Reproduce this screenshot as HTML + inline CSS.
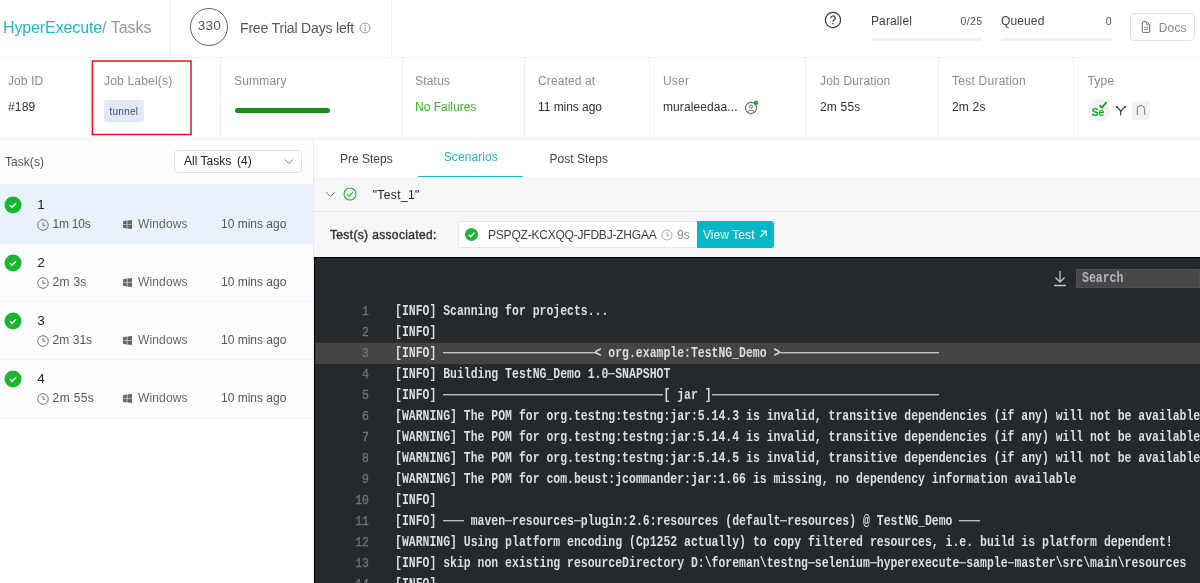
<!DOCTYPE html>
<html>
<head>
<meta charset="utf-8">
<style>
*{box-sizing:border-box;margin:0;padding:0}
html,body{width:1200px;height:583px;overflow:hidden;background:#fff}
body{font-family:"Liberation Sans",sans-serif;color:#333;position:relative;font-size:12px}
.abs{position:absolute;white-space:nowrap}
.vline{position:absolute;width:1px;background:#eef0f5}
.hline{position:absolute;height:1px;background:#eef0f5}
.lbl{position:absolute;font-size:12px;color:#8c8c8c;white-space:nowrap;letter-spacing:.2px}
.val{position:absolute;font-size:12px;color:#333;white-space:nowrap;letter-spacing:.2px}
/* tasks */
.trow{position:absolute;left:0;width:313px;height:58px}
.trow.sel{}
.trow .num{position:absolute;left:37.3px;top:12.5px;font-size:13.5px;color:#222}
.trow .dur{position:absolute;left:52.6px;top:33px;font-size:12px;color:#555;letter-spacing:-.2px}
.trow .os{position:absolute;left:138px;top:33px;font-size:12px;color:#666;letter-spacing:.15px}
.trow .ago{position:absolute;left:221px;top:33px;font-size:12px;color:#555;letter-spacing:0}
.trow svg.ok{position:absolute;left:4px;top:12px}
.trow svg.clk{position:absolute;left:37px;top:34.5px}
.trow svg.win{position:absolute;left:123px;top:36px}
/* log */
#log{position:absolute;left:314px;top:257px;width:886px;height:326px;background:#24292e;overflow:hidden}
.ln{position:absolute;left:0;width:886px;height:21px;font-family:"Liberation Mono",monospace;font-size:11.47px;line-height:21px;color:#dedede;white-space:pre}
.ln .n{position:absolute;left:0;width:55px;text-align:right;color:#70757a;-webkit-text-stroke:.3px #70757a;transform:scaleY(1.15);transform-origin:0 14px}
.ln .t{position:absolute;left:81px;font-weight:bold;transform:scaleY(1.22);transform-origin:0 14px}
.ln .d{display:inline-block;height:1.35px;background:#d4d4d4;vertical-align:2.9px}
.ln.hl{background:#444}
.ln.hl:before{content:"";position:absolute;left:0;top:-1px;width:886px;height:0;border-top:1px dotted #30353a}
</style>
</head>
<body>
<div id="root" style="position:absolute;left:0;top:0;width:1200px;height:583px;will-change:transform">
<!-- top header -->
<div class="abs" style="left:3px;top:18.5px;font-size:16px;color:#1fb6c9;letter-spacing:-.12px">HyperExecute<span style="color:#999;letter-spacing:0">/ Tasks</span></div>
<div class="vline" style="left:170px;top:0;height:57px"></div>
<div class="vline" style="left:391px;top:0;height:57px"></div>
<div class="abs" style="left:190px;top:7.8px;width:38.4px;height:38.4px;border:1.3px solid #5e6272;border-radius:50%;text-align:center;line-height:34.6px;font-size:13.5px;color:#525868;letter-spacing:.3px;padding-left:.3px">330</div>
<div class="abs" style="left:240px;top:20px;font-size:14px;color:#4e556e;letter-spacing:-.175px">Free Trial Days left</div>
<svg class="abs" style="left:359px;top:22px" width="12" height="12" viewBox="0 0 12 12"><circle cx="6" cy="6" r="5" fill="none" stroke="#999" stroke-width="1"/><rect x="5.5" y="5" width="1" height="4" fill="#999"/><rect x="5.5" y="3" width="1" height="1.2" fill="#999"/></svg>

<svg class="abs" style="left:824.2px;top:10.8px" width="18" height="18" viewBox="0 0 18 18"><circle cx="9" cy="9" r="7.6" fill="none" stroke="#333" stroke-width="1.2"/><path d="M6.8 7.2 a2.2 2.2 0 1 1 3.2 1.9 c-.7.4-1 .8-1 1.6" fill="none" stroke="#333" stroke-width="1.2"/><circle cx="9" cy="12.8" r=".8" fill="#333"/></svg>
<div class="abs" style="left:871px;top:14.3px;font-size:12px;color:#444;letter-spacing:.12px">Parallel</div>
<div class="abs" style="left:960.5px;top:15px;font-size:10.5px;color:#555;letter-spacing:.35px">0/25</div>
<div class="abs" style="left:871px;top:37.6px;width:111px;height:3.5px;background:#eff1f9;border-radius:2px"></div>
<div class="abs" style="left:1001px;top:14.3px;font-size:12px;color:#444;letter-spacing:.12px">Queued</div>
<div class="abs" style="left:1105.7px;top:15px;font-size:10.5px;color:#555">0</div>
<div class="abs" style="left:1001px;top:37.6px;width:111px;height:3.5px;background:#eff1f9;border-radius:2px"></div>
<div class="abs" style="left:1130.4px;top:13.4px;width:64.6px;height:27.4px;border:1px solid #dbe3f3;border-radius:4px"></div>
<svg class="abs" style="left:1141px;top:20.7px" width="10" height="12" viewBox="0 0 10 12"><path d="M1.3 1.6a.9.9 0 0 1 .9-.9h3.3l3.2 3v6.8a.9.9 0 0 1-.9.9H2.2a.9.9 0 0 1-.9-.9z" fill="none" stroke="#6a6a6a" stroke-width="1"/><path d="M5.6 1v2.8h2.9" fill="none" stroke="#6a6a6a" stroke-width=".8"/><path d="M2.8 6.5h4.4M2.8 8.5h4.4" stroke="#777" stroke-width=".8"/></svg>
<div class="abs" style="left:1158.8px;top:20.5px;font-size:12px;color:#8a8a8a;letter-spacing:.15px">Docs</div>
<div class="hline" style="left:0;top:57px;width:1200px"></div>

<!-- job info row -->
<div class="vline" style="left:220px;top:57px;height:80px"></div>
<div class="vline" style="left:401.5px;top:57px;height:80px"></div>
<div class="vline" style="left:524px;top:57px;height:80px"></div>
<div class="vline" style="left:649px;top:57px;height:80px"></div>
<div class="vline" style="left:805px;top:57px;height:80px"></div>
<div class="vline" style="left:938px;top:57px;height:80px"></div>
<div class="vline" style="left:1073px;top:57px;height:80px"></div>
<div class="hline" style="left:0;top:137px;width:1200px;height:2.5px;background:#f5f6fa"></div>

<div class="lbl" style="left:8px;top:74px;letter-spacing:.1px">Job ID</div>
<div class="val" style="left:8px;top:100px">#189</div>
<div class="vline" style="left:90px;top:57px;height:80px"></div>
<svg class="abs" style="left:90px;top:58px" width="104" height="80" viewBox="0 0 104 80"><rect x="2.4" y="3" width="98.6" height="73.5" fill="none" stroke="#e60a0a" stroke-width="1.45"/></svg>
<div class="lbl" style="left:104px;top:74px">Job Label(s)</div>
<div class="abs" style="left:104px;top:99.5px;width:39.8px;height:22.2px;background:#e1e9f8;border-radius:3px;font-size:10px;color:#3d4b6b;text-align:center;line-height:24.3px;letter-spacing:.25px">tunnel</div>
<div class="lbl" style="left:234px;top:74px">Summary</div>
<div class="abs" style="left:234.6px;top:107.7px;width:95.6px;height:5.6px;background:#1a8c1a;border-radius:3px"></div>
<div class="lbl" style="left:415px;top:74px">Status</div>
<div class="val" style="left:415px;top:100px;color:#2eb82e;letter-spacing:0">No Failures</div>
<div class="lbl" style="left:538px;top:74px;letter-spacing:.12px">Created at</div>
<div class="val" style="left:538px;top:100px;letter-spacing:-.05px">11 mins ago</div>
<div class="lbl" style="left:663px;top:74px">User</div>
<div class="val" style="left:663px;top:100px;letter-spacing:.1px">muraleedaa...</div>
<svg class="abs" style="left:744px;top:100px" width="16" height="16" viewBox="0 0 16 16"><circle cx="7" cy="8" r="5.6" fill="none" stroke="#666" stroke-width="1.1"/><circle cx="7" cy="6.6" r="1.7" fill="none" stroke="#666" stroke-width=".9"/><path d="M3.8 11.8c.6-2 5.8-2 6.4 0" fill="none" stroke="#666" stroke-width=".9"/><circle cx="11.9" cy="2.7" r="2.3" fill="#12b535"/></svg>
<div class="lbl" style="left:820px;top:74px">Job Duration</div>
<div class="val" style="left:820px;top:100px">2m 55s</div>
<div class="lbl" style="left:952px;top:74px;letter-spacing:.25px">Test Duration</div>
<div class="val" style="left:952px;top:100px">2m 2s</div>
<div class="lbl" style="left:1087.5px;top:74px">Type</div>
<div class="abs" style="left:1087.7px;top:98.8px;width:22.6px;height:23.2px;background:#f2f3f8;border-radius:50%"></div>
<div class="abs" style="left:1091.6px;top:106.1px;font-size:10.6px;font-weight:bold;color:#12a818;letter-spacing:-.1px;line-height:12px">Se</div>
<svg class="abs" style="left:1098px;top:100px" width="10" height="10" viewBox="0 0 10 10"><path d="M1.5 5.4l2.5 2.2L8.6 2" fill="none" stroke="#12a818" stroke-width="1.9"/></svg>
<svg class="abs" style="left:1114px;top:104px" width="14" height="13" viewBox="0 0 14 13"><path d="M6.7 11.4V8.4C6.7 6.2 4.6 4.6 2.6 2.6M6.7 8C7 6 9.4 4.4 11.2 2.6" fill="none" stroke="#444" stroke-width="1.2"/><path d="M1.9 4.3V1.9H4.3zM12 4.3V1.9H9.6z" fill="#444"/></svg>
<div class="abs" style="left:1131.6px;top:101.3px;width:18.2px;height:18.5px;background:#f2f3f8;border-radius:2.5px"></div>
<svg class="abs" style="left:1135px;top:104px" width="12" height="12" viewBox="0 0 12 12"><path d="M2.2 11V5.3a3.7 3.7 0 0 1 7.4 0V11" fill="none" stroke="#777" stroke-width="1"/></svg>

<!-- left task panel -->
<div class="abs" style="left:0;top:140px;width:313px;height:443px;background:#fcfdff"></div>
<div class="abs" style="left:5px;top:155px;font-size:12px;color:#555;letter-spacing:.05px">Task(s)</div>
<div class="abs" style="left:174px;top:150px;width:128px;height:23px;border:1px solid #d9e0ef;border-radius:4px;background:#fff"></div>
<div class="abs" style="left:184px;top:154px;font-size:12px;color:#222;letter-spacing:0">All Tasks <span style="margin-left:2.5px">(4)</span></div>
<svg class="abs" style="left:284px;top:158px" width="10" height="7" viewBox="0 0 10 7"><path d="M1 1.5l4 4 4-4" fill="none" stroke="#7a7a7a" stroke-width="1"/></svg>
<div class="vline" style="left:313px;top:140px;height:443px;background:#e8ebf2"></div>

<div class="abs" style="left:0;top:184px;width:313px;height:59px;background:#eaf2fd"></div>
<div class="hline" style="left:0;top:243px;width:313px;background:#f4f5fa"></div>
<div class="hline" style="left:0;top:301.2px;width:313px;background:#f4f5fa"></div>
<div class="hline" style="left:0;top:359.4px;width:313px;background:#f4f5fa"></div>
<div class="hline" style="left:0;top:417.6px;width:313px;background:#f4f5fa"></div>
<div class="abs" style="left:0;top:418.6px;width:313px;height:165px;background:#fff"></div>
<div class="trow sel" style="top:184px"><svg class="ok" width="18" height="18" viewBox="0 0 18 18"><circle cx="9" cy="9" r="8.5" fill="#1cb533"/><path d="M6 9.3l2.1 2 3.9-4.1" fill="none" stroke="#fff" stroke-width="1.35"/></svg><span class="num">1</span><svg class="clk" width="12" height="12" viewBox="0 0 12 12"><circle cx="6" cy="6" r="5.3" fill="none" stroke="#747474" stroke-width="1"/><path d="M6 3v3.3h2.4" fill="none" stroke="#747474" stroke-width="1"/></svg><span class="dur" style="letter-spacing:-.25px">1m 10s</span><svg class="win" width="9" height="9" viewBox="0 0 9 9"><path d="M0 1.2l3.8-.6v3.6H0zM4.4.5L9 0v4.2H4.4zM0 4.8h3.8v3.6L0 7.8zM4.4 4.8H9V9l-4.6-.5z" fill="#666"/></svg><span class="os">Windows</span><span class="ago">10 mins ago</span></div>
<div class="trow" style="top:242px"><svg class="ok" width="18" height="18" viewBox="0 0 18 18"><circle cx="9" cy="9" r="8.5" fill="#1cb533"/><path d="M6 9.3l2.1 2 3.9-4.1" fill="none" stroke="#fff" stroke-width="1.35"/></svg><span class="num">2</span><svg class="clk" width="12" height="12" viewBox="0 0 12 12"><circle cx="6" cy="6" r="5.3" fill="none" stroke="#747474" stroke-width="1"/><path d="M6 3v3.3h2.4" fill="none" stroke="#747474" stroke-width="1"/></svg><span class="dur" style="letter-spacing:.26px">2m 3s</span><svg class="win" width="9" height="9" viewBox="0 0 9 9"><path d="M0 1.2l3.8-.6v3.6H0zM4.4.5L9 0v4.2H4.4zM0 4.8h3.8v3.6L0 7.8zM4.4 4.8H9V9l-4.6-.5z" fill="#666"/></svg><span class="os">Windows</span><span class="ago">10 mins ago</span></div>
<div class="trow" style="top:300px"><svg class="ok" width="18" height="18" viewBox="0 0 18 18"><circle cx="9" cy="9" r="8.5" fill="#1cb533"/><path d="M6 9.3l2.1 2 3.9-4.1" fill="none" stroke="#fff" stroke-width="1.35"/></svg><span class="num">3</span><svg class="clk" width="12" height="12" viewBox="0 0 12 12"><circle cx="6" cy="6" r="5.3" fill="none" stroke="#747474" stroke-width="1"/><path d="M6 3v3.3h2.4" fill="none" stroke="#747474" stroke-width="1"/></svg><span class="dur" style="letter-spacing:.03px">2m 31s</span><svg class="win" width="9" height="9" viewBox="0 0 9 9"><path d="M0 1.2l3.8-.6v3.6H0zM4.4.5L9 0v4.2H4.4zM0 4.8h3.8v3.6L0 7.8zM4.4 4.8H9V9l-4.6-.5z" fill="#666"/></svg><span class="os">Windows</span><span class="ago">10 mins ago</span></div>
<div class="trow" style="top:358px"><svg class="ok" width="18" height="18" viewBox="0 0 18 18"><circle cx="9" cy="9" r="8.5" fill="#1cb533"/><path d="M6 9.3l2.1 2 3.9-4.1" fill="none" stroke="#fff" stroke-width="1.35"/></svg><span class="num">4</span><svg class="clk" width="12" height="12" viewBox="0 0 12 12"><circle cx="6" cy="6" r="5.3" fill="none" stroke="#747474" stroke-width="1"/><path d="M6 3v3.3h2.4" fill="none" stroke="#747474" stroke-width="1"/></svg><span class="dur" style="letter-spacing:.37px">2m 55s</span><svg class="win" width="9" height="9" viewBox="0 0 9 9"><path d="M0 1.2l3.8-.6v3.6H0zM4.4.5L9 0v4.2H4.4zM0 4.8h3.8v3.6L0 7.8zM4.4 4.8H9V9l-4.6-.5z" fill="#666"/></svg><span class="os">Windows</span><span class="ago">10 mins ago</span></div>

<!-- right panel tabs -->
<div class="abs" style="left:340px;top:151.6px;font-size:12px;color:#444;letter-spacing:0">Pre Steps</div>
<div class="abs" style="left:443.7px;top:150.4px;font-size:12px;color:#1fb6c9;letter-spacing:.1px">Scenarios</div>
<div class="abs" style="left:549.4px;top:151.6px;font-size:12px;color:#444;letter-spacing:.06px">Post Steps</div>
<div class="abs" style="left:417.8px;top:175.8px;width:105.6px;height:1px;background:#1fb6c9"></div>
<div class="abs" style="left:314px;top:177px;width:886px;height:80px;background:#f7f7f7"></div>
<div class="hline" style="left:314px;top:211px;width:886px;background:#e4e8f2"></div>
<svg class="abs" style="left:325px;top:191px" width="11" height="7" viewBox="0 0 11 7"><path d="M1 1.2l4.5 4.3L10 1.2" fill="none" stroke="#777" stroke-width="1"/></svg>
<svg class="abs" style="left:343px;top:187.4px" width="14" height="14" viewBox="0 0 14 14"><circle cx="7" cy="7" r="6" fill="none" stroke="#1cb533" stroke-width="1.1"/><path d="M4.2 7.2l2 2 3.6-3.8" fill="none" stroke="#1cb533" stroke-width="1.1"/></svg>
<div class="abs" style="left:372.7px;top:188px;font-size:12px;color:#222;letter-spacing:.4px">"Test_1"</div>
<div class="abs" style="left:330px;top:228px;font-size:12px;color:#333;letter-spacing:.35px;font-weight:500;-webkit-text-stroke:.4px #333">Test(s) associated:</div>
<div class="abs" style="left:458px;top:221px;width:316px;height:27px;background:#fff;border:1px solid #e4e7ee;border-radius:3px"></div>
<svg class="abs" style="left:465px;top:228px" width="13" height="13" viewBox="0 0 13 13"><circle cx="6.5" cy="6.5" r="6.5" fill="#1cb533"/><path d="M3.6 6.7l2 2 3.8-4" fill="none" stroke="#fff" stroke-width="1.5"/></svg>
<div class="abs" style="left:488px;top:227.6px;font-size:12px;color:#444;letter-spacing:-.21px">PSPQZ-KCXQQ-JFDBJ-ZHGAA</div>
<svg class="abs" style="left:660.7px;top:229.2px" width="12" height="12" viewBox="0 0 12 12"><circle cx="6" cy="6" r="5" fill="none" stroke="#aaa" stroke-width="1"/><path d="M6 3v3.3h2.4" fill="none" stroke="#aaa" stroke-width="1"/></svg>
<div class="abs" style="left:677px;top:227.6px;font-size:12px;color:#888">9s</div>
<div class="abs" style="left:697.2px;top:220.6px;width:77px;height:27.4px;background:#06b7c9;border-radius:0 3px 3px 0;color:#fff;font-size:12px;line-height:28.4px;padding-left:5.8px;letter-spacing:.07px">View Test</div>
<svg class="abs" style="left:758.5px;top:230.3px" width="8" height="8" viewBox="0 0 8 8"><path d="M1 7.2L7 1.2M2.3 1H7.2v4.9" fill="none" stroke="#fff" stroke-width="1.1"/></svg>

<!-- log -->
<div id="log">
<svg class="abs" style="left:739px;top:14px" width="14" height="16" viewBox="0 0 14 16"><path d="M7 0v11M2.5 6.5L7 11 11.5 6.5M1 14.5h12" fill="none" stroke="#c4c4c4" stroke-width="1.3"/></svg>
<div class="abs" style="left:762px;top:12px;width:124px;height:19px;background:#464749;border:1px dotted #55575a"></div>
<div class="abs" style="left:768px;top:14px;font-family:'Liberation Mono',monospace;font-size:11.5px;color:#b6b4b8;font-weight:bold;transform:scaleY(1.2);transform-origin:0 3px">Search</div>
<!--LOG-->
<div class="ln" style="top:44px"><span class="n">1</span><span class="t">[INFO] Scanning for projects...</span></div>
<div class="ln" style="top:65px"><span class="n">2</span><span class="t">[INFO]</span></div>
<div class="ln hl" style="top:86px"><span class="n">3</span><span class="t">[INFO] <i class="d" style="width:151.40px"></i>&lt; org.example:TestNG_Demo &gt;<i class="d" style="width:158.29px"></i></span></div>
<div class="ln" style="top:107px"><span class="n">4</span><span class="t">[INFO] Building TestNG_Demo 1.0<i class="d" style="width:6.88px"></i>SNAPSHOT</span></div>
<div class="ln" style="top:128px"><span class="n">5</span><span class="t">[INFO] <i class="d" style="width:220.22px"></i>[ jar ]<i class="d" style="width:227.11px"></i></span></div>
<div class="ln" style="top:149px"><span class="n">6</span><span class="t">[WARNING] The POM for org.testng:testng:jar:5.14.3 is invalid, transitive dependencies (if any) will not be available</span></div>
<div class="ln" style="top:170px"><span class="n">7</span><span class="t">[WARNING] The POM for org.testng:testng:jar:5.14.4 is invalid, transitive dependencies (if any) will not be available</span></div>
<div class="ln" style="top:191px"><span class="n">8</span><span class="t">[WARNING] The POM for org.testng:testng:jar:5.14.5 is invalid, transitive dependencies (if any) will not be available</span></div>
<div class="ln" style="top:212px"><span class="n">9</span><span class="t">[WARNING] The POM for com.beust:jcommander:jar:1.66 is missing, no dependency information available</span></div>
<div class="ln" style="top:233px"><span class="n">10</span><span class="t">[INFO]</span></div>
<div class="ln" style="top:254px"><span class="n">11</span><span class="t">[INFO] <i class="d" style="width:20.65px"></i> maven<i class="d" style="width:6.88px"></i>resources<i class="d" style="width:6.88px"></i>plugin:2.6:resources (default<i class="d" style="width:6.88px"></i>resources) @ TestNG_Demo <i class="d" style="width:20.65px"></i></span></div>
<div class="ln" style="top:275px"><span class="n">12</span><span class="t">[WARNING] Using platform encoding (Cp1252 actually) to copy filtered resources, i.e. build is platform dependent!</span></div>
<div class="ln" style="top:296px"><span class="n">13</span><span class="t">[INFO] skip non existing resourceDirectory D:\foreman\testng<i class="d" style="width:6.88px"></i>selenium<i class="d" style="width:6.88px"></i>hyperexecute<i class="d" style="width:6.88px"></i>sample<i class="d" style="width:6.88px"></i>master\src\main\resources</span></div>
<div class="ln" style="top:317px"><span class="n">14</span><span class="t">[INFO]</span></div>
<!--/LOG-->
<div class="abs" style="left:0;top:0;width:886px;height:1px;background:#000"></div>
<div class="abs" style="left:0;top:0;width:1px;height:326px;background:#000"></div>
</div>
</div>
</body>
</html>
